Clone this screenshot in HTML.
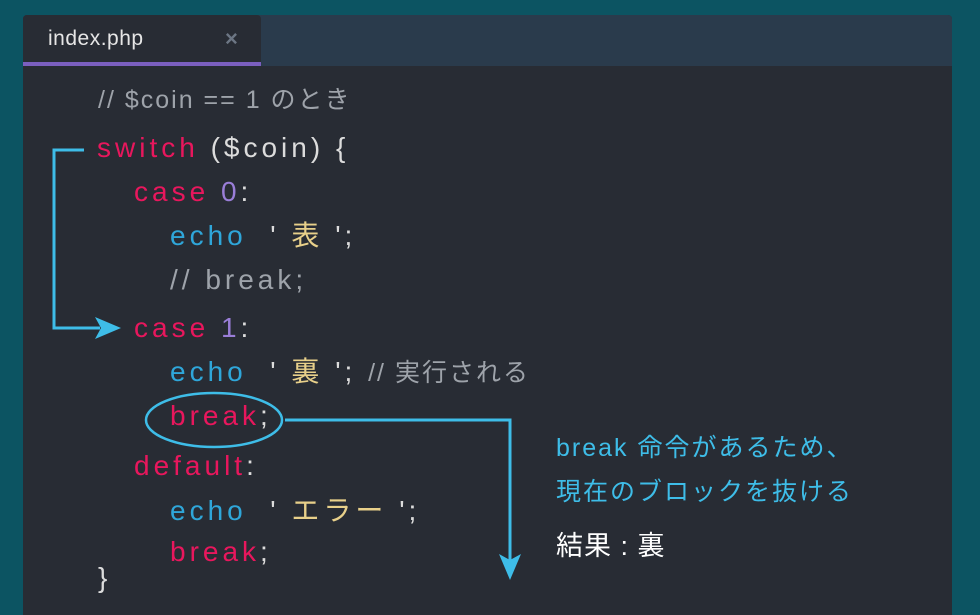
<!DOCTYPE html>
<html><head><meta charset="utf-8"><style>
*{margin:0;padding:0;box-sizing:border-box}
body{width:980px;height:600px;background:#0c5462;position:relative;overflow:hidden;font-family:"Liberation Sans","Noto Sans CJK JP",sans-serif}
.panel{position:absolute;left:23px;top:15px;width:929px;height:600px;background:#282c34;border-radius:4px 4px 0 0}
.tabbar{position:absolute;left:23px;top:15px;width:929px;height:51px;background:#2a3b4c;border-radius:4px 4px 0 0}
.tab{position:absolute;left:23px;top:15px;width:238px;height:51px;background:#282c34;border-radius:4px 4px 0 0;border-bottom:4px solid #7b5fbf}
.tab span{position:absolute;left:25px;top:12px;font-size:21px;color:#e6e6e6;letter-spacing:0.5px}
.tab i{position:absolute;left:202px;top:11px;font-style:normal;font-size:22px;color:#6c7684;font-weight:bold}
.l{position:absolute;font-size:28px;letter-spacing:4px;color:#dcdcdc;white-space:nowrap;line-height:1}
.k{color:#e8175d}.n{color:#9a7ed8}.e{color:#2fa6d9}.s{color:#e8d08a}.c{color:#9ea3aa;font-size:25px;letter-spacing:2px}
.note{position:absolute;left:556px;font-size:25px;color:#3ebde8;white-space:nowrap;letter-spacing:2px}
</style></head><body>
<div class="panel"></div><div class="tabbar"></div>
<div class="tab"><span>index.php</span><i>×</i></div>
<div class="l c" style="left:98px;top:88px">// $coin == 1 のとき</div>
<div class="l" style="left:97px;top:134px"><span class="k">switch</span> ($coin) {</div>
<div class="l" style="left:134px;top:178px"><span class="k">case</span> <span class="n">0</span>:</div>
<div class="l" style="left:170px;top:222px"><span class="e">echo</span> &nbsp;' <span class="s">表</span> ';</div>
<div class="l" style="left:170px;top:266px;color:#9ea3aa">// break;</div>
<div class="l" style="left:134px;top:314px"><span class="k">case</span> <span class="n">1</span>:</div>
<div class="l" style="left:170px;top:358px"><span class="e">echo</span> &nbsp;' <span class="s">裏</span> '; <span class="c">// 実行される</span></div>
<div class="l" style="left:170px;top:402px"><span class="k">break</span>;</div>
<div class="l" style="left:134px;top:452px"><span class="k">default</span>:</div>
<div class="l" style="left:170px;top:497px"><span class="e">echo</span> &nbsp;' <span class="s">エラー</span> ';</div>
<div class="l" style="left:170px;top:538px"><span class="k">break</span>;</div>
<div class="l" style="left:98px;top:564px">}</div>
<svg width="980" height="600" style="position:absolute;left:0;top:0">
<g fill="none" stroke="#3ebde8" stroke-width="3">
<polyline points="84,150 54,150 54,328 100,328"/>
<ellipse cx="214" cy="420" rx="68" ry="27" stroke-width="2.5"/>
<polyline points="285,420 510,420 510,565"/>
</g>
<polygon points="95,317 121,328 95,339 101,328" fill="#3ebde8"/>
<polygon points="499,554 510,580 521,554 510,560" fill="#3ebde8"/>
</svg>
<div class="note" style="top:428px">break 命令があるため、</div>
<div class="note" style="top:472px">現在のブロックを抜ける</div>
<div class="note" style="top:524px;color:#fff;font-size:27px;letter-spacing:1px">結果 : 裏</div>
</body></html>
